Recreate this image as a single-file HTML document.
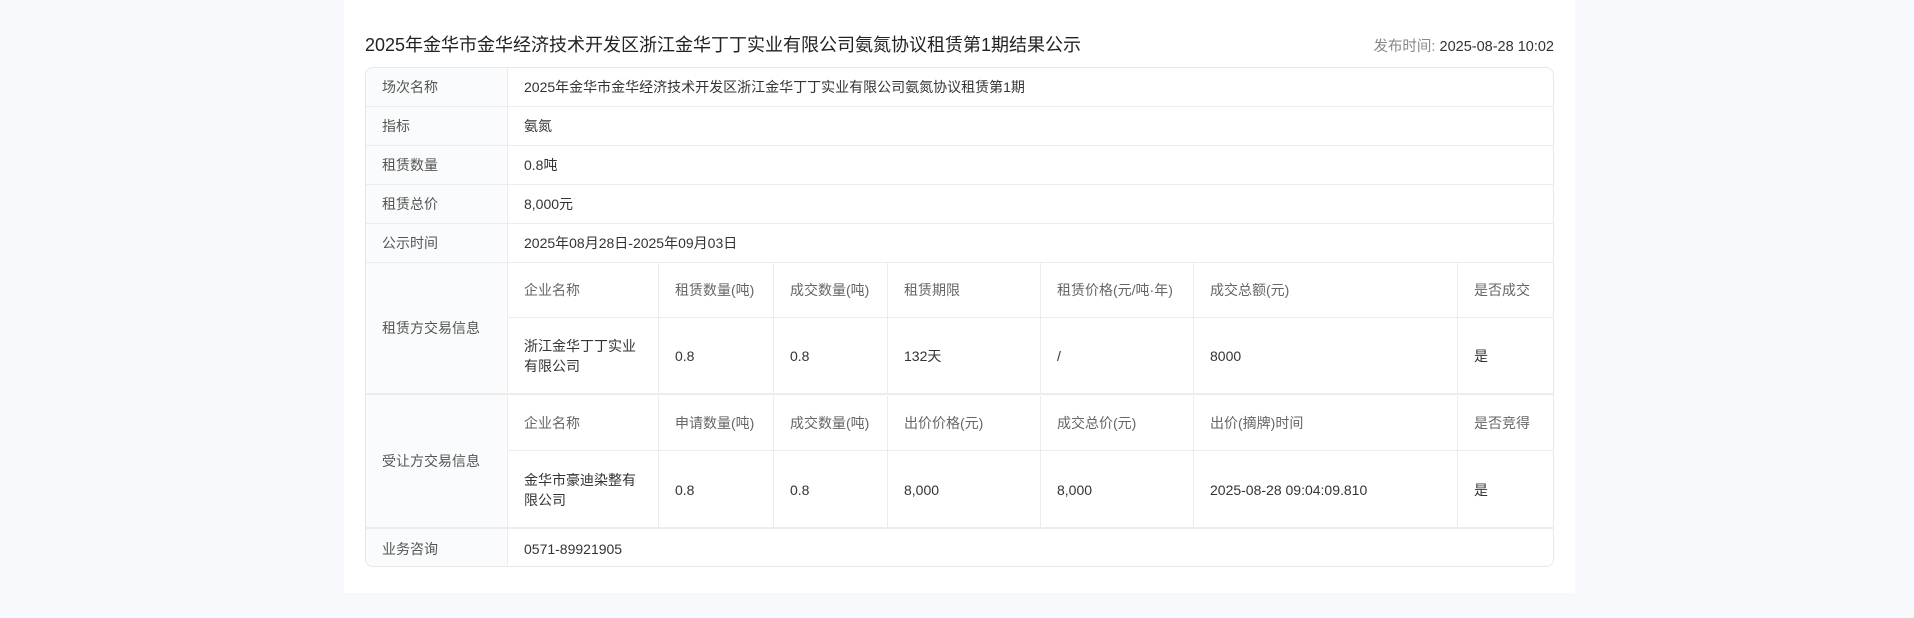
<!DOCTYPE html>
<html><head><meta charset="utf-8"><style>
*{margin:0;padding:0;box-sizing:border-box}
body{width:1914px;height:618px;background:#f7f9fc;font-family:"Liberation Sans","Noto Sans CJK SC",sans-serif;position:relative;overflow:hidden;color:#333}
.wrap{position:absolute;left:344px;top:0;width:1231px;height:593px;background:#fff}
.title{position:absolute;left:21px;top:31px;font-size:18px;color:#222;white-space:nowrap}
.time{position:absolute;right:21px;top:35px;font-size:14.5px;color:#333}
.time span{color:#888}
.tb{position:absolute;left:21px;top:67px;width:1189px;height:500px;border:1px solid #e8e8e8;border-radius:8px;overflow:hidden}
.r{position:absolute;left:0;width:1189px;border-bottom:1px solid #ececec;font-size:14px}
.l{position:absolute;left:0;top:0;bottom:0;width:142px;background:#fafbfc;border-right:1px solid #ececec;color:#555;padding-left:16px;display:flex;align-items:center}
.v{position:absolute;left:158px;top:0;bottom:0;display:flex;align-items:center;color:#333}
.c{position:absolute;display:flex;align-items:center;padding-left:16px;border-right:1px solid #ececec;border-bottom:1px solid #ececec;font-size:14px;line-height:20px}
.h{color:#666}
</style></head><body>
<div class="wrap">
<div class="title">2025年金华市金华经济技术开发区浙江金华丁丁实业有限公司氨氮协议租赁第1期结果公示</div>
<div class="time"><span>发布时间: </span>2025-08-28 10:02</div>
<div class="tb">
<div class="r" style="top:0;height:39px"><div class="l">场次名称</div><div class="v">2025年金华市金华经济技术开发区浙江金华丁丁实业有限公司氨氮协议租赁第1期</div></div>
<div class="r" style="top:39px;height:39px"><div class="l">指标</div><div class="v">氨氮</div></div>
<div class="r" style="top:78px;height:39px"><div class="l">租赁数量</div><div class="v">0.8吨</div></div>
<div class="r" style="top:117px;height:39px"><div class="l">租赁总价</div><div class="v">8,000元</div></div>
<div class="r" style="top:156px;height:39px"><div class="l">公示时间</div><div class="v">2025年08月28日-2025年09月03日</div></div>
<div class="r" style="top:195px;height:132px;border-bottom:2px solid #ececec"><div class="l">租赁方交易信息</div></div>
<div class="r" style="top:327px;height:134px;border-bottom:2px solid #ececec"><div class="l">受让方交易信息</div></div>
<div class="r" style="top:461px;height:39px;border-bottom:none"><div class="l">业务咨询</div><div class="v">0571-89921905</div></div>
<div class="c h" style="left:142px;top:195px;width:151px;height:55px">企业名称</div>
<div class="c h" style="left:293px;top:195px;width:115px;height:55px">租赁数量(吨)</div>
<div class="c h" style="left:408px;top:195px;width:114px;height:55px">成交数量(吨)</div>
<div class="c h" style="left:522px;top:195px;width:153px;height:55px">租赁期限</div>
<div class="c h" style="left:675px;top:195px;width:153px;height:55px">租赁价格(元/吨·年)</div>
<div class="c h" style="left:828px;top:195px;width:264px;height:55px">成交总额(元)</div>
<div class="c h" style="left:1092px;top:195px;width:97px;height:55px">是否成交</div>
<div class="c" style="left:142px;top:250px;width:151px;height:77px">浙江金华丁丁实业<br>有限公司</div>
<div class="c" style="left:293px;top:250px;width:115px;height:77px">0.8</div>
<div class="c" style="left:408px;top:250px;width:114px;height:77px">0.8</div>
<div class="c" style="left:522px;top:250px;width:153px;height:77px">132天</div>
<div class="c" style="left:675px;top:250px;width:153px;height:77px">/</div>
<div class="c" style="left:828px;top:250px;width:264px;height:77px">8000</div>
<div class="c" style="left:1092px;top:250px;width:97px;height:77px">是</div>
<div class="c h" style="left:142px;top:328px;width:151px;height:55px">企业名称</div>
<div class="c h" style="left:293px;top:328px;width:115px;height:55px">申请数量(吨)</div>
<div class="c h" style="left:408px;top:328px;width:114px;height:55px">成交数量(吨)</div>
<div class="c h" style="left:522px;top:328px;width:153px;height:55px">出价价格(元)</div>
<div class="c h" style="left:675px;top:328px;width:153px;height:55px">成交总价(元)</div>
<div class="c h" style="left:828px;top:328px;width:264px;height:55px">出价(摘牌)时间</div>
<div class="c h" style="left:1092px;top:328px;width:97px;height:55px">是否竞得</div>
<div class="c" style="left:142px;top:383px;width:151px;height:78px">金华市豪迪染整有<br>限公司</div>
<div class="c" style="left:293px;top:383px;width:115px;height:78px">0.8</div>
<div class="c" style="left:408px;top:383px;width:114px;height:78px">0.8</div>
<div class="c" style="left:522px;top:383px;width:153px;height:78px">8,000</div>
<div class="c" style="left:675px;top:383px;width:153px;height:78px">8,000</div>
<div class="c" style="left:828px;top:383px;width:264px;height:78px">2025-08-28 09:04:09.810</div>
<div class="c" style="left:1092px;top:383px;width:97px;height:78px">是</div>
</div>
</div>
</body></html>
